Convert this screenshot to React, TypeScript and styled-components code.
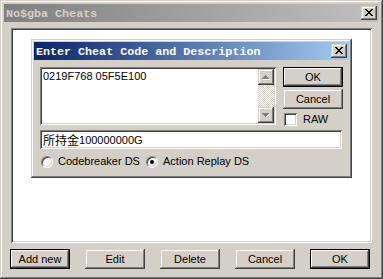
import React from "react";
import styled, { createGlobalStyle, css } from "styled-components";

const GlobalStyle = createGlobalStyle`
  html, body { margin: 0; padding: 0; background: #d4d0c8; }
  body { font-family: "Liberation Sans", "Noto Sans CJK SC", sans-serif; font-size: 11px; }
  * { box-sizing: border-box; }
`;

const raised = css`
  box-shadow: inset -1px -1px #404040, inset 1px 1px #d4d0c8,
    inset -2px -2px #808080, inset 2px 2px #ffffff;
`;

const sunken = css`
  box-shadow: inset 1px 1px #808080, inset -1px -1px #ffffff,
    inset 2px 2px #404040, inset -2px -2px #d4d0c8;
`;

const Window = styled.div`
  position: relative;
  width: 383px;
  height: 279px;
  padding: 4px;
  background: #d4d0c8;
  display: flex;
  flex-direction: column;
  ${raised}
`;

const TitleBar = styled.div<{ $active?: boolean }>`
  height: 18px;
  flex: none;
  display: flex;
  align-items: center;
  justify-content: space-between;
  padding: 0 2px 0 2px;
  background: ${(p) =>
    p.$active
      ? "linear-gradient(to right, #0a246a, #a6caf0)"
      : "linear-gradient(to right, #808080, #c0c0c0)"};
`;

const TitleText = styled.span<{ $active?: boolean }>`
  font-family: "Liberation Mono", "Noto Sans CJK SC", monospace;
  font-weight: bold;
  font-size: 11.7px;
  line-height: 18px;
  color: ${(p) => (p.$active ? "#ffffff" : "#d4d0c8")};
  white-space: nowrap;
  padding-top: 1px;
`;

const CaptionButton = styled.div`
  width: 16px;
  height: 14px;
  background: #d4d0c8;
  display: flex;
  align-items: center;
  justify-content: center;
  padding: 0 1px 1px 0;
  ${raised}
`;

const Body = styled.div`
  flex: 1;
  display: flex;
  flex-direction: column;
  padding: 6px 7px 0 7px;
`;

const ListBox = styled.div`
  height: 215px;
  background: #ffffff;
  ${sunken}
`;

const ButtonRow = styled.div`
  display: flex;
  gap: 15px;
  margin: 6px 0 0 -1px;
`;

const PushButton = styled.div<{ $default?: boolean; $h?: number }>`
  width: 60px;
  height: ${(p) => p.$h ?? 20}px;
  background: #d4d0c8;
  display: flex;
  align-items: center;
  justify-content: center;
  color: #000;
  font-size: 11px;
  white-space: nowrap;
  ${(p) =>
    p.$default
      ? css`
          box-shadow: inset 0 0 0 1px #000000, inset -2px -2px #404040,
            inset 2px 2px #ffffff, inset -3px -3px #808080;
        `
      : raised}
`;

const Dialog = styled.div`
  position: absolute;
  left: 31px;
  top: 39px;
  width: 321px;
  height: 139px;
  padding: 3px;
  background: #d4d0c8;
  display: flex;
  flex-direction: column;
  ${raised}
`;

const DialogBody = styled.div`
  display: flex;
  flex-direction: column;
  padding: 7px 6px 0 6px;
`;

const TopRow = styled.div`
  display: flex;
  gap: 7px;
  height: 59px;
`;

const CodeBox = styled.div`
  width: 236px;
  height: 58px;
  background: #fff;
  padding: 2px;
  display: flex;
  ${sunken}
`;

const CodeText = styled.div`
  flex: 1;
  padding: 0 0 0 1px;
  line-height: 14px;
  color: #000;
  white-space: nowrap;
`;

const ScrollBar = styled.div`
  width: 16px;
  display: flex;
  flex-direction: column;
`;

const ScrollButton = styled.div`
  height: 16px;
  flex: none;
  background: #d4d0c8;
  display: flex;
  align-items: center;
  justify-content: center;
  ${raised}
`;

const ScrollTrack = styled.div`
  flex: 1;
  background: repeating-conic-gradient(#d4d0c8 0 25%, #ffffff 0 50%) 0 0 / 2px 2px;
`;

const SideColumn = styled.div`
  width: 60px;
  display: flex;
  flex-direction: column;
  gap: 2px;
`;

const CheckRow = styled.div`
  display: flex;
  align-items: center;
  gap: 6px;
  margin: 2px 0 0 1px;
`;

const CheckBox = styled.div`
  width: 13px;
  height: 13px;
  background: #fff;
  ${sunken}
`;

const Label = styled.span`
  color: #000;
  font-size: 11px;
  line-height: 13px;
  white-space: nowrap;
`;

const DescField = styled.div`
  margin-top: 4px;
  width: 302px;
  height: 19px;
  background: #fff;
  padding: 2px 3px;
  display: flex;
  align-items: center;
  color: #000;
  white-space: nowrap;
  ${sunken}
`;

const Cjk = styled.span`
  font-family: "Noto Sans CJK SC", sans-serif;
  font-size: 12px;
  line-height: 14px;
`;

const RadioRow = styled.div`
  display: flex;
  align-items: center;
  margin: 6px 0 0 1px;
`;

const RadioOption = styled.div<{ $w?: number }>`
  display: flex;
  align-items: center;
  gap: 5px;
  width: ${(p) => (p.$w ? `${p.$w}px` : "auto")};
`;

const Radio = styled.div<{ $checked?: boolean }>`
  position: relative;
  width: 12px;
  height: 12px;
  border-radius: 50%;
  background: #fff;
  border: 1px solid;
  border-color: #808080 #ffffff #ffffff #808080;
  box-shadow: inset 1px 1px #404040, inset -1px -1px #d4d0c8;
  &::after {
    content: "";
    display: ${(p) => (p.$checked ? "block" : "none")};
    position: absolute;
    left: 3px;
    top: 3px;
    width: 4px;
    height: 4px;
    border-radius: 50%;
    background: #000;
  }
`;

const CloseGlyph = () => (
  <svg width="8" height="7" viewBox="0 0 8 7" shapeRendering="crispEdges">
    <path
      fill="#000"
      d="M0 0h2v1H0zM6 0h2v1H6zM1 1h2v1H1zM5 1h2v1H5zM2 2h4v1H2zM3 3h2v1H3zM2 4h4v1H2zM1 5h2v1H1zM5 5h2v1H5zM0 6h2v1H0zM6 6h2v1H6z"
    />
  </svg>
);

const Arrow = ({ dir }: { dir: "up" | "down" }) => {
  const d =
    dir === "up"
      ? "M3 0h1v1H3zM2 1h3v1H2zM1 2h5v1H1zM0 3h7v1H0z"
      : "M0 0h7v1H0zM1 1h5v1H1zM2 2h3v1H2zM3 3h1v1H3z";
  return (
    <svg width="8" height="5" viewBox="0 0 8 5" shapeRendering="crispEdges">
      <path fill="#ffffff" d={d} transform="translate(1,1)" />
      <path fill="#808080" d={d} />
    </svg>
  );
};

export default function App() {
  return (
    <>
      <GlobalStyle />
      <Window>
        <TitleBar>
          <TitleText>No$gba Cheats</TitleText>
          <CaptionButton>
            <CloseGlyph />
          </CaptionButton>
        </TitleBar>
        <Body>
          <ListBox />
          <ButtonRow>
            <PushButton $default>Add new</PushButton>
            <PushButton>Edit</PushButton>
            <PushButton>Delete</PushButton>
            <PushButton>Cancel</PushButton>
            <PushButton $default>OK</PushButton>
          </ButtonRow>
        </Body>

        <Dialog>
          <TitleBar $active>
            <TitleText $active>Enter Cheat Code and Description</TitleText>
            <CaptionButton>
              <CloseGlyph />
            </CaptionButton>
          </TitleBar>
          <DialogBody>
            <TopRow>
              <CodeBox>
                <CodeText>0219F768 05F5E100</CodeText>
                <ScrollBar>
                  <ScrollButton>
                    <Arrow dir="up" />
                  </ScrollButton>
                  <ScrollTrack />
                  <ScrollButton>
                    <Arrow dir="down" />
                  </ScrollButton>
                </ScrollBar>
              </CodeBox>
              <SideColumn>
                <PushButton $default>OK</PushButton>
                <PushButton>Cancel</PushButton>
                <CheckRow>
                  <CheckBox />
                  <Label>RAW</Label>
                </CheckRow>
              </SideColumn>
            </TopRow>
            <DescField>
              <Cjk>所持金</Cjk>
              <span>100000000G</span>
            </DescField>
            <RadioRow>
              <RadioOption $w={105}>
                <Radio />
                <Label>Codebreaker DS</Label>
              </RadioOption>
              <RadioOption>
                <Radio $checked />
                <Label>Action Replay DS</Label>
              </RadioOption>
            </RadioRow>
          </DialogBody>
        </Dialog>
      </Window>
    </>
  );
}
